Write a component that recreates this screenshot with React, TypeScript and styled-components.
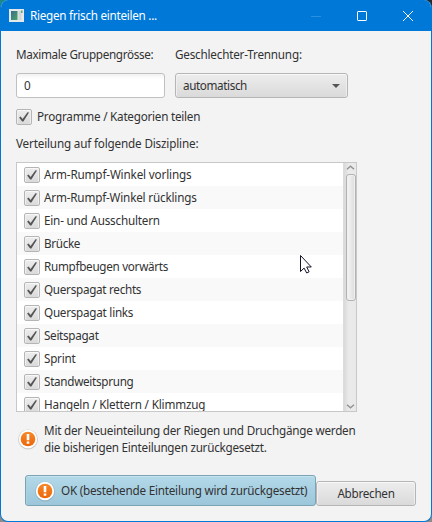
import React from "react";
import styled, { createGlobalStyle, css } from "styled-components";

const GlobalStyle = createGlobalStyle`
  * { box-sizing: border-box; }
  body { margin: 0; background: #6f7478; overflow: hidden; }
`;

const Desktop = styled.div`
  width: 432px;
  height: 522px;
  background: linear-gradient(100deg, #1b8a86 0 30%, #222a33 60% 100%) top / 100% 20px no-repeat, #8b8b8b;
`;

const Window = styled.main`
  position: relative;
  display: flex;
  flex-direction: column;
  width: 432px;
  height: 522px;
  border: 1px solid #0078d4;
  border-top: 0;
  border-radius: 8px;
  overflow: hidden;
  background: #f3f3f3;
  color: #323232;
  font: 11.7px/17px "Noto Sans", "Open Sans", sans-serif;
`;

const TitleBar = styled.header`
  display: flex;
  align-items: center;
  flex: none;
  height: 31px;
  padding-left: 8px;
  background: #0078d7;
  color: #fff;
`;

const Title = styled.div`
  flex: 1;
  margin-left: 6px;
`;

const Caption = styled.div`
  display: flex;
  justify-content: center;
  width: 46px;
`;

const Text = styled.span<{ $spacing?: number }>`
  white-space: nowrap;
  letter-spacing: ${(p) => p.$spacing ?? -0.22}px;
`;

const Body = styled.div`
  display: flex;
  flex-direction: column;
  flex: 1;
  padding: 15px 15px 15px;
`;

const Fields = styled.div`
  display: grid;
  grid-template-columns: 149px 173px;
  column-gap: 10px;
  grid-template-rows: 17px 25px;
  row-gap: 10px;
`;

const raised = css`
  border: 1px solid #b5b5b5;
  border-radius: 3px;
  background: linear-gradient(#ededed, #dadada);
  box-shadow: inset 0 1px #f8f8f8, inset 1px 0 #efefef, inset -1px 0 #efefef;
`;

const NumberField = styled.div`
  display: flex;
  align-items: center;
  padding-left: 7px;
  border: 1px solid #c0c0c0;
  border-radius: 3px;
  background: linear-gradient(#f1f1f1, #fff 5px);
`;

const Combo = styled.div`
  ${raised}
  display: flex;
  align-items: center;
  justify-content: space-between;
  padding: 0 7px;
`;

const CheckLine = styled.div`
  display: flex;
  align-items: center;
  gap: 5px;
  height: 17px;
  margin: 10px 0;
`;

const Box = styled.span`
  ${raised}
  display: flex;
  align-items: center;
  justify-content: center;
  flex: none;
  width: 16px;
  height: 16px;
  border-radius: 2px;
`;

const ListFrame = styled.div`
  display: flex;
  width: 341px;
  height: 250px;
  margin-top: 10px;
  border: 1px solid #c8c8c8;
  background: #fff;
  overflow: hidden;
`;

const Rows = styled.div`
  flex: 1;
`;

const Row = styled.div`
  display: flex;
  align-items: center;
  gap: 4px;
  height: 23px;
  padding-left: 7px;
  &:nth-child(even) { background: #f9f9f9; }
`;

const ScrollBar = styled.div`
  display: flex;
  flex-direction: column;
  align-items: center;
  justify-content: space-between;
  width: 13px;
  padding: 2px 0;
  background: linear-gradient(90deg, #d9d9d9, #eaeaea 40%, #e9e9e9);
  border-left: 1px solid #dcdcdc;
`;

const Thumb = styled.div`
  width: 10px;
  height: 127px;
  margin: 4px 0 auto 1px;
  border: 1px solid #b2b2b2;
  border-radius: 3px;
  background: linear-gradient(90deg, #f5f5f5, #e9e9e9 50%, #dcdcdc);
  box-shadow: inset 0 0 0 1px #f0f0f0;
`;

const Notice = styled.div`
  display: flex;
  align-items: center;
  gap: 5px;
  margin: 10px 0 0 1px;
`;

const Lines = styled.div`
  display: flex;
  flex-direction: column;
`;

const Actions = styled.div`
  display: flex;
  justify-content: flex-end;
  align-items: flex-end;
  margin-top: auto;
`;

const Button = styled.button<{ $primary?: boolean }>`
  ${raised}
  display: flex;
  align-items: center;
  justify-content: center;
  gap: 5px;
  width: 100px;
  height: 25px;
  padding: 0;
  color: inherit;
  font: inherit;
  ${(p) => p.$primary && css`
    width: 291px;
    height: 31px;
    justify-content: flex-start;
    padding-left: 8px;
    border-color: #7ba3b4;
    background: linear-gradient(#b3d9e9, #9cc6da);
    box-shadow: inset 0 1px #c4e4f0, inset 1px 0 #acd3e4;
  `}
`;

const Badge = styled.svg`
  flex: none;
`;

const Pointer = styled.svg`
  position: absolute;
  left: 298px;
  top: 254px;
`;

const Check = () => (
  <Box>
    <svg width="12" height="12" viewBox="0 0 12 12">
      <path d="M1.1 6.5 2.6 5.5 4.6 8 9.5 1.2 11 1.5 5.4 10.5 4.1 10.5Z" fill="#555" />
    </svg>
  </Box>
);

const WarningIcon = () => (
  <Badge width="22" height="22" viewBox="0 0 22 22">
    <defs>
      <linearGradient id="warn" x1="0" y1="0" x2="0" y2="1">
        <stop stopColor="#f58a2c" />
        <stop offset="1" stopColor="#ee6507" />
      </linearGradient>
    </defs>
    <circle cx="11" cy="11.4" r="10" fill="#777" opacity=".3" />
    <circle cx="11" cy="11" r="9.2" fill="#fff" />
    <circle cx="11" cy="11" r="7.3" fill="url(#warn)" />
    <path d="M9.7 6h2.6v6.2H9.7zM9.7 13.5h2.6v2.3H9.7z" fill="#fff" />
  </Badge>
);

const AppIcon = () => (
  <svg width="15" height="13" viewBox="0 0 15 13">
    <defs>
      <linearGradient id="pane" x1="0" y1="0" x2="1" y2="1">
        <stop stopColor="#3c6b8c" />
        <stop offset="1" stopColor="#4aa567" />
      </linearGradient>
    </defs>
    <path d="M0 0h15v13H0z" fill="#e4e8ea" />
    <path d="M2 2h6.5v9H2z" fill="url(#pane)" />
    <path d="M9.5 2h3v9h-3z" fill="#cfd6d8" />
    <path d="M12 1.5h1.5V4H12z" fill="#57a574" />
  </svg>
);

const Chevron = ({ down }: { down?: boolean }) => (
  <svg width="9" height="5" viewBox="0 0 9 5">
    <path d={down ? "M1 .8 4.5 3.8 8 .8" : "M1 4.2 4.5 1.2 8 4.2"} fill="none" stroke="#949494" strokeWidth="1.5" />
  </svg>
);

const disciplines: [string, number][] = [
  ["Arm-Rumpf-Winkel vorlings", -0.15],
  ["Arm-Rumpf-Winkel rücklings", -0.18],
  ["Ein- und Ausschultern", -0.2],
  ["Brücke", -0.33],
  ["Rumpfbeugen vorwärts", -0.29],
  ["Querspagat rechts", -0.28],
  ["Querspagat links", -0.25],
  ["Seitspagat", -0.3],
  ["Sprint", -0.25],
  ["Standweitsprung", -0.29],
  ["Hangeln / Klettern / Klimmzug", -0.17],
];

export default function App() {
  return (
    <Desktop>
      <GlobalStyle />
      <Window>
        <TitleBar>
          <AppIcon />
          <Title><Text $spacing={-0.27}>Riegen frisch einteilen ...</Text></Title>
          <Caption>
            <svg width="10" height="10"><path d="M0 5.5h10" stroke="#2b90e0" /></svg>
          </Caption>
          <Caption>
            <svg width="10" height="10"><rect x=".5" y=".5" width="9" height="9" rx=".6" fill="none" stroke="#fff" /></svg>
          </Caption>
          <Caption>
            <svg width="10" height="10"><path d="m0 0 10 10M10 0 0 10" stroke="#fff" /></svg>
          </Caption>
        </TitleBar>
        <Body>
          <Fields>
            <Text $spacing={-0.34}>Maximale Gruppengrösse:</Text>
            <Text $spacing={-0.2}>Geschlechter-Trennung:</Text>
            <NumberField><Text>0</Text></NumberField>
            <Combo>
              <Text $spacing={-0.39}>automatisch</Text>
              <svg width="8" height="4"><path d="M0 0h8L4 4z" fill="#555" /></svg>
            </Combo>
          </Fields>
          <CheckLine><Check /><Text $spacing={-0.24}>Programme / Kategorien teilen</Text></CheckLine>
          <Text $spacing={-0.17}>Verteilung auf folgende Diszipline:</Text>
          <ListFrame>
            <Rows>
              {disciplines.map(([name, spacing]) => (
                <Row key={name}><Check /><Text $spacing={spacing}>{name}</Text></Row>
              ))}
            </Rows>
            <ScrollBar><Chevron /><Thumb /><Chevron down /></ScrollBar>
          </ListFrame>
          <Notice>
            <WarningIcon />
            <Lines>
              <Text>Mit der Neueinteilung der Riegen und Druchgänge werden</Text>
              <Text $spacing={-0.25}>die bisherigen Einteilungen zurückgesetzt.</Text>
            </Lines>
          </Notice>
          <Actions>
            <Button $primary><WarningIcon /><Text>OK (bestehende Einteilung wird zurückgesetzt)</Text></Button>
            <Button><Text $spacing={-0.27}>Abbrechen</Text></Button>
          </Actions>
        </Body>
        <Pointer width="14" height="21" viewBox="0 0 14 21">
          <path d="M1.5 1.5v16l3.6-3.4 2.6 4.9 2.4-1.2-2.4-4.8h4.6z" fill="#fff" stroke="#15152a" />
        </Pointer>
      </Window>
    </Desktop>
  );
}
